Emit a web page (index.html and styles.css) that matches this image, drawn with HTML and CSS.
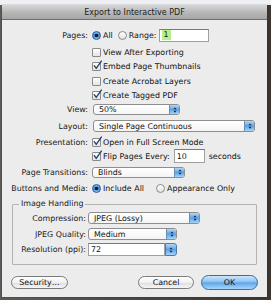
FILE: index.html
```html
<!DOCTYPE html>
<html>
<head>
<meta charset="utf-8">
<link rel="stylesheet" href="styles.css">
</head>
<body>
<div class="window">
  <div class="titlebar">Export to Interactive PDF</div>
  <div class="content">
    <div class="row row-pages">
      <span class="label">Pages:</span>
      <span class="radio on"></span><span class="opt">All</span>
      <span class="radio range-radio"></span><span class="opt">Range:</span>
      <span class="field range-field"><span class="sel">1</span></span>
    </div>
    <div class="row row-check row-first">
      <span class="label"></span>
      <span class="check"></span><span class="opt">View After Exporting</span>
    </div>
    <div class="row row-check tall">
      <span class="label"></span>
      <span class="check on"><svg viewBox="0 0 12 12" class="tick"><path d="M2.4 6.2 L4.6 9.2 L10.2 1.2" /></svg></span><span class="opt">Embed Page Thumbnails</span>
    </div>
    <div class="row row-check">
      <span class="label"></span>
      <span class="check"></span><span class="opt">Create Acrobat Layers</span>
    </div>
    <div class="row row-check tall">
      <span class="label"></span>
      <span class="check on"><svg viewBox="0 0 12 12" class="tick"><path d="M2.4 6.2 L4.6 9.2 L10.2 1.2" /></svg></span><span class="opt">Create Tagged PDF</span>
    </div>
    <div class="row row-view">
      <span class="label">View:</span>
      <span class="popup w-view"><span class="ptext">50%</span><span class="arrows"><svg viewBox="0 0 8 10"><path d="M4 1.5 L6 4 L2 4 Z M4 8.5 L6 6 L2 6 Z"/></svg></span></span>
    </div>
    <div class="row row-layout">
      <span class="label">Layout:</span>
      <span class="popup w-layout"><span class="ptext">Single Page Continuous</span><span class="arrows"><svg viewBox="0 0 8 10"><path d="M4 1.5 L6 4 L2 4 Z M4 8.5 L6 6 L2 6 Z"/></svg></span></span>
    </div>
    <div class="row row-pres">
      <span class="label">Presentation:</span>
      <span class="check on"><svg viewBox="0 0 12 12" class="tick"><path d="M2.4 6.2 L4.6 9.2 L10.2 1.2" /></svg></span><span class="opt">Open in Full Screen Mode</span>
    </div>
    <div class="row row-flip">
      <span class="label"></span>
      <span class="check on"><svg viewBox="0 0 12 12" class="tick"><path d="M2.4 6.2 L4.6 9.2 L10.2 1.2" /></svg></span><span class="opt">Flip Pages Every:</span>
      <span class="field flip-field">10</span><span class="opt">seconds</span>
    </div>
    <div class="row row-trans">
      <span class="label">Page Transitions:</span>
      <span class="popup w-trans"><span class="ptext">Blinds</span><span class="arrows"><svg viewBox="0 0 8 10"><path d="M4 1.5 L6 4 L2 4 Z M4 8.5 L6 6 L2 6 Z"/></svg></span></span>
    </div>
    <div class="row row-media">
      <span class="label">Buttons and Media:</span>
      <span class="radio on"></span><span class="opt">Include All</span>
      <span class="radio app-radio"></span><span class="opt">Appearance Only</span>
    </div>

    <fieldset class="group">
      <legend>Image Handling</legend>
      <div class="row grow g-comp">
        <span class="glabel">Compression:</span>
        <span class="popup w-comp"><span class="ptext">JPEG (Lossy)</span><span class="arrows"><svg viewBox="0 0 8 10"><path d="M4 1.5 L6 4 L2 4 Z M4 8.5 L6 6 L2 6 Z"/></svg></span></span>
      </div>
      <div class="row grow g-qual">
        <span class="glabel">JPEG Quality:</span>
        <span class="popup w-qual"><span class="ptext">Medium</span><span class="arrows"><svg viewBox="0 0 8 10"><path d="M4 1.5 L6 4 L2 4 Z M4 8.5 L6 6 L2 6 Z"/></svg></span></span>
      </div>
      <div class="row grow g-res">
        <span class="glabel">Resolution (ppi):</span>
        <span class="combo"><span class="ctext">72</span><span class="cbtn"><svg viewBox="0 0 8 10"><path d="M4 1.5 L6 4 L2 4 Z M4 8.5 L6 6 L2 6 Z"/></svg></span></span>
      </div>
    </fieldset>

    <div class="buttons">
      <span class="btn security">Security…</span>
      <span class="btn cancel">Cancel</span>
      <span class="btn ok">OK</span>
    </div>
  </div>
</div>
</body>
</html>
```

FILE: styles.css
```css
html, body {
  margin: 0;
  padding: 0;
}
body {
  width: 271px;
  height: 300px;
  overflow: hidden;
  font-family: "DejaVu Sans", "Liberation Sans", sans-serif;
  font-size: 7.9px;
  color: #111;
  background:
    linear-gradient(to bottom, #eef0f3 0, #eef0f3 5px, transparent 5px),
    linear-gradient(to right, #5e5a55 0, #4c4641 50%, #3d3530 100%);
}
.window {
  margin: 5px 0 0 2px;
  width: 265px;
  height: 292px;
  background: #ececec;
  display: flex;
  flex-direction: column;
  box-shadow: 0 0 1px rgba(0,0,0,0.5);
}
.titlebar {
  height: 15px;
  box-sizing: border-box;
  background: linear-gradient(#d6d6d6, #b4b4b4 60%, #a6a6a6);
  border-bottom: 1px solid #6f6f6f;
  display: flex;
  align-items: center;
  justify-content: center;
  color: #222;
  font-size: 8px;
}
.content {
  padding-top: 8px;
  display: flex;
  flex-direction: column;
}
.row {
  display: flex;
  align-items: center;
  height: 14px;
  white-space: nowrap;
}
.label {
  width: 86px;
  margin-right: 4px;
  text-align: right;
  flex: none;
  color: #1a1a1a;
}
.opt {
  margin-right: 5px;
}
.row-first { margin-top: 3px; }
.tall { height: 15px; }
.row-view { height: 13px; }
.row-layout { height: 12px; margin-top: 4px; }
.row-pres { margin-top: 3px; }
.row-trans { height: 12px; margin-top: 3px; }
.row-media { margin-top: 3px; }

.radio {
  width: 9px;
  height: 9px;
  box-sizing: border-box;
  border-radius: 50%;
  border: 1px solid #8a8a8a;
  background: linear-gradient(#ffffff, #e2e2e2);
  margin-right: 2px;
  flex: none;
}
.radio.on {
  border-color: #33588c;
  background:
    radial-gradient(circle at 50% 50%, #14202e 0, #14202e 1.4px, transparent 2.1px),
    linear-gradient(#7ab8ee, #3a86d8 50%, #86c4f4);
}
.range-radio { margin-left: 0; }
.app-radio { margin-left: 7px; }

.check {
  width: 9px;
  height: 9px;
  box-sizing: border-box;
  border: 1px solid #8a8a8a;
  border-radius: 1px;
  background: linear-gradient(#ffffff, #e4e4e4);
  margin-right: 2px;
  position: relative;
  flex: none;
}
.tick {
  position: absolute;
  left: -1px;
  top: -3px;
  width: 11px;
  height: 11px;
  overflow: visible;
}
.tick path {
  fill: none;
  stroke: #24456f;
  stroke-width: 1.5;
  stroke-linecap: round;
  stroke-linejoin: round;
}

.field {
  height: 13px;
  box-sizing: border-box;
  border: 1px solid #a0a0a0;
  border-top-color: #7a7a7a;
  background: #fff;
  display: flex;
  align-items: center;
  padding-left: 2px;
  flex: none;
}
.range-field { width: 50px; margin-left: -2px; }
.sel {
  background: #b6f08a;
  padding: 0 2px 0 1px;
  line-height: 10px;
}
.flip-field { width: 31px; height: 14px; margin-left: -1px; margin-right: 4px; }

.popup {
  height: 11px;
  box-sizing: border-box;
  border: 1px solid #8e8e8e;
  border-radius: 3px;
  background: linear-gradient(#ffffff, #f4f4f4);
  display: flex;
  align-items: stretch;
  flex: none;
  overflow: hidden;
}
.ptext {
  flex: 1;
  padding-left: 5px;
  display: flex;
  align-items: center;
}
.arrows, .cbtn {
  width: 9px;
  background: linear-gradient(#b4d8f6, #5aa2e6 50%, #a6d4f8);
  border-left: 1px solid #6a8fb8;
  display: flex;
  align-items: center;
  justify-content: center;
}
.arrows svg, .cbtn svg {
  width: 6px;
  height: 8px;
}
.arrows path, .cbtn path { fill: #15233a; }
.w-view { width: 87px; margin-left: 1px; }
.w-layout { width: 162px; margin-left: 1px; height: 12px; }
.w-trans { width: 93px; height: 11px; }

.group {
  margin: 4px 0 0 10px;
  width: 245px;
  box-sizing: border-box;
  border: 1px solid #b3b3b3;
  border-radius: 1px;
  padding: 3px 0 8px 0;
  min-width: 0;
}
.group legend {
  margin-left: 6px;
  padding: 0 2px;
  line-height: 10px;
  color: #1a1a1a;
}
.glabel {
  width: 73px;
  margin-right: 2px;
  text-align: right;
  flex: none;
  color: #1a1a1a;
}
.grow { height: 12px; }
.g-qual { margin-top: 4px; }
.g-res { margin-top: 3px; height: 13px; }
.w-comp { width: 112px; height: 12px; }
.w-qual { width: 89px; height: 12px; }
.combo {
  display: flex;
  height: 13px;
  width: 89px;
  flex: none;
}
.ctext {
  flex: 1;
  border: 1px solid #a0a0a0;
  border-top-color: #7a7a7a;
  background: #fff;
  display: flex;
  align-items: center;
  padding-left: 2px;
}
.cbtn {
  border: 1px solid #4f79a8;
  border-radius: 0 3px 3px 0;
  width: 10px;
}

.buttons {
  margin-top: 10px;
  height: 15px;
  display: flex;
  align-items: center;
  padding: 0 9px;
}
.btn {
  height: 13px;
  box-sizing: border-box;
  border: 1px solid #7b7b7b;
  border-radius: 7px;
  background: linear-gradient(#ffffff, #f0f0f0 50%, #dcdcdc 51%, #f6f6f6);
  display: flex;
  align-items: center;
  justify-content: center;
  color: #111;
}
.security { width: 57px; }
.cancel { width: 56px; margin-left: auto; }
.ok {
  width: 57px;
  height: 15px;
  margin-left: 7px;
  border-radius: 8px;
  border-color: #3e6a9c;
  background: linear-gradient(#cfe6fb, #8cc2f2 45%, #5ea6ea 52%, #a8d6fb);
}
```
